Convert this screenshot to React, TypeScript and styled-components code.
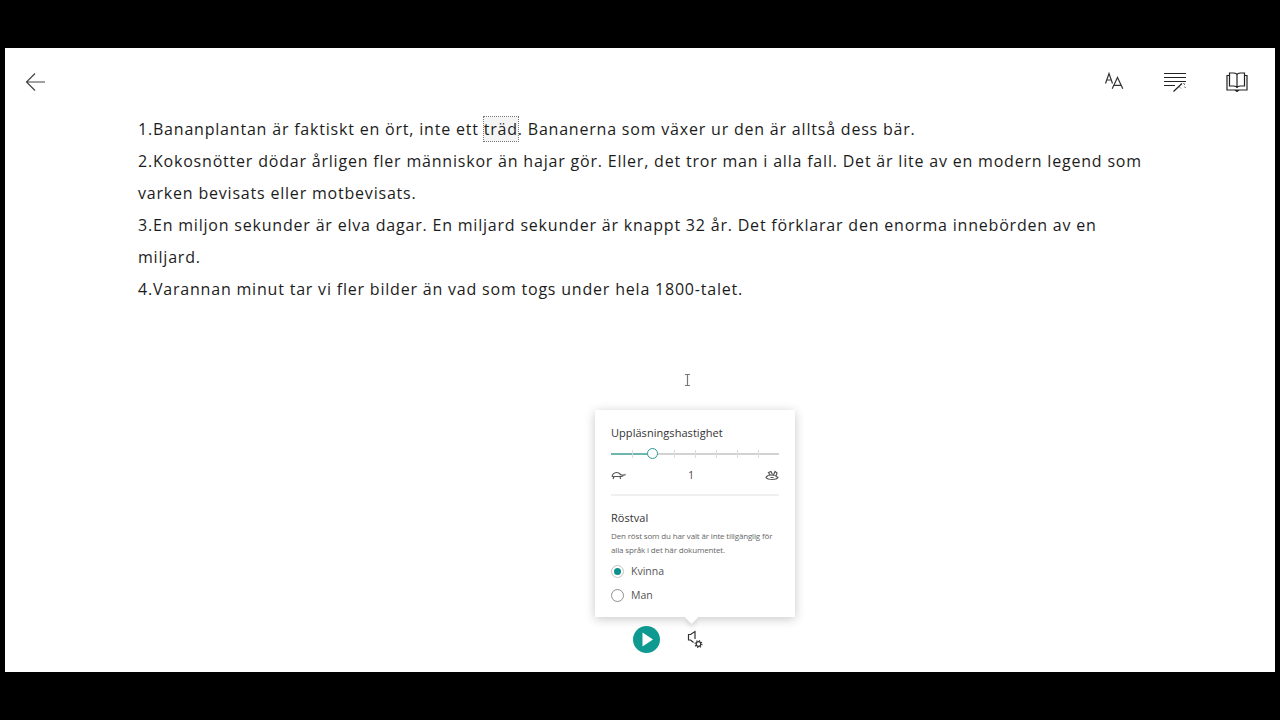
import React from 'react';
import styled, { createGlobalStyle } from 'styled-components';

const GlobalStyle = createGlobalStyle`
  html, body { margin: 0; padding: 0; height: 100%; background: #000; }
  body { font-family: "Open Sans", "Noto Sans", sans-serif; }
`;

const Frame = styled.div`
  width: 1280px;
  height: 720px;
  box-sizing: border-box;
  padding: 48px 5px;
  background: #000;
  overflow: hidden;
`;

const Page = styled.main`
  position: relative;
  height: 624px;
  background: #fff;
  display: flex;
  flex-direction: column;
`;

const TopBar = styled.header`
  display: flex;
  align-items: center;
  justify-content: space-between;
  height: 65px;
  padding: 2px 27px 0 19px;
  box-sizing: border-box;
  flex: none;
`;

const IconGroup = styled.div`
  display: flex;
  align-items: center;
  gap: 39px;
`;

const Icon = styled.svg`
  display: block;
  flex: none;
  fill: none;
  stroke: ${p => p.color || '#333'};
  stroke-width: 1.2;
`;

const Article = styled.article`
  padding: 0 128px 0 133px;
  font-size: 16px;
  line-height: 32px;
  letter-spacing: 0.8px;
  color: #1c1c1c;
`;

const Line = styled.p`
  margin: 0;
`;

const Word = styled.span`
  outline: 1px dotted #777;
  outline-offset: 0;
  background: #f4f4f4;
  padding: 1px 0;
`;

const Dock = styled.div`
  margin-top: auto;
  margin-left: 590px;
  width: 200px;
  display: flex;
  flex-direction: column;
  padding-bottom: 11px;
`;

const Popover = styled.section`
  position: relative;
  box-sizing: border-box;
  height: 207px;
  padding: 15px 16px 0;
  background: #fff;
  box-shadow: 0 2px 10px rgba(0, 0, 0, 0.22);
  &::after {
    content: '';
    position: absolute;
    left: 91px;
    bottom: -6px;
    width: 11px;
    height: 11px;
    background: #fff;
    transform: rotate(45deg) scale(0.85);
    box-shadow: 3px 3px 5px rgba(0, 0, 0, 0.1);
  }
`;

const Heading = styled.h3`
  margin: 0;
  font-size: 11px;
  line-height: 15px;
  font-weight: 400;
  color: #333;
  letter-spacing: 0.05px;
`;

const Slider = styled.div`
  position: relative;
  height: 14px;
  margin-top: 7px;
  display: flex;
  align-items: center;
`;

const Track = styled.div`
  position: relative;
  width: 168px;
  height: 2px;
  background: #d2d2d2;
`;

const TrackFill = styled.div`
  height: 2px;
  width: 37px;
  background: #6fb5b0;
`;

const Tick = styled.span`
  position: absolute;
  top: -3px;
  width: 1px;
  height: 8px;
  background: #dcdcdc;
`;

const Thumb = styled.span`
  position: absolute;
  top: -5px;
  left: 36px;
  width: 9px;
  height: 9px;
  border: 1px solid #2c9a94;
  border-radius: 50%;
  background: #fff;
`;

const SpeedRow = styled.div`
  display: flex;
  align-items: center;
  justify-content: space-between;
  height: 20px;
  margin-top: 4px;
  padding-bottom: 9px;
  border-bottom: 2px solid #f0f0f0;
  font-size: 10px;
  color: #444;
`;

const SpeedValue = styled.span`
  margin-right: 9px;
`;

const VoiceHeading = styled(Heading)`
  margin-top: 14px;
`;

const Note = styled.p`
  margin: 4px 0 0;
  font-size: 8px;
  line-height: 13.5px;
  letter-spacing: -0.15px;
  color: #666;
`;

const RadioRow = styled.label`
  display: flex;
  align-items: center;
  gap: 7px;
  height: 24px;
  font-size: 10.5px;
  color: #555;
`;

const RadioList = styled.div`
  margin-top: 3px;
`;

const RadioMark = styled.span<{ $on?: boolean }>`
  box-sizing: border-box;
  width: 13px;
  height: 13px;
  border-radius: 50%;
  border: 1px solid #8f8f8f;
  background: #fff;
  display: flex;
  align-items: center;
  justify-content: center;
  ${p => p.$on && 'border-color: #c4c4c4;'}
  &::before {
    content: '';
    display: ${p => (p.$on ? 'block' : 'none')};
    width: 7px;
    height: 7px;
    border-radius: 50%;
    background: #0b9189;
  }
`;

const Controls = styled.div`
  display: flex;
  align-items: center;
  height: 44px;
  padding-left: 38px;
  gap: 27px;
`;

const PlayButton = styled.button`
  width: 27px;
  height: 27px;
  padding: 0;
  border: 0;
  border-radius: 50%;
  background: #0e9a90;
  display: flex;
  align-items: center;
  justify-content: center;
`;

const Caret = styled.div`
  position: absolute;
  left: 680px;
  top: 326px;
  width: 5px;
  height: 12px;
`;

export default function App() {
  const ticks = [21, 42, 63, 84, 105, 126, 147];
  return (
    <>
      <GlobalStyle />
      <Frame>
        <Page>
          <TopBar>
            <Icon width="24" height="24" viewBox="0 0 24 24" color="#444">
              <path d="M21 12H2.500M11 3.500L2.500 12l8.500 8.500" />
            </Icon>
            <IconGroup>
              <Icon width="20" height="20" viewBox="0 0 20 20" strokeWidth="1" color="#333">
                <path d="M1.500 11.500L5 1.500l3.500 10M2.600 8h4.800M8.200 16.800L13.500 5.500l5.300 11.300M9.800 13.300h7.400" />
              </Icon>
              <Icon width="24" height="20" viewBox="0 0 24 20" color="#222">
                <path d="M1 1.500h22M1 5.500h22M1 9.500h22M1 13.500h11M10.500 19.500l8.500-8" />
                <path d="M20.500 11.500l1.500 1M21.500 15l1 .5M17 15.500l.8.8" strokeWidth="1" />
              </Icon>
              <Icon width="22" height="20" viewBox="0 0 22 20" strokeWidth="1.300" color="#222">
                <path d="M3.500 1h4c2 0 3.500 1 3.500 2.500V16c0-1.200-1.500-2-3.500-2h-4zM18.500 1h-4c-2 0-3.500 1-3.500 2.500V16c0-1.200 1.500-2 3.500-2h4z" />
                <path d="M3.500 3.500H1V18h20V3.500h-2.500M9 18l2 1.500 2-1.500" />
              </Icon>
            </IconGroup>
          </TopBar>
          <Article>
            <Line>1.Bananplantan är faktiskt en ört, inte ett <Word>träd</Word>. Bananerna som växer ur den är alltså dess bär.</Line>
            <Line>2.Kokosnötter dödar årligen fler människor än hajar gör. Eller, det tror man i alla fall. Det är lite av en modern legend som varken bevisats eller motbevisats.</Line>
            <Line>3.En miljon sekunder är elva dagar. En miljard sekunder är knappt 32 år. Det förklarar den enorma innebörden av en miljard.</Line>
            <Line>4.Varannan minut tar vi fler bilder än vad som togs under hela 1800-talet.</Line>
          </Article>
          <Caret>
            <Icon width="5" height="12" viewBox="0 0 5 12" color="#777">
              <path d="M0 .5h5M0 11.500h5M2.500 .5v11" />
            </Icon>
          </Caret>
          <Dock>
            <Popover>
              <Heading>Uppläsningshastighet</Heading>
              <Slider>
                <Track>
                  <TrackFill />
                  {ticks.map(t => <Tick key={t} style={{ left: t }} />)}
                  <Thumb />
                </Track>
              </Slider>
              <SpeedRow>
                <Icon width="15" height="10" viewBox="0 0 15 10" strokeWidth="0.8" color="#555">
                  <path d="M1 6.500c.5-2.500 3-4 5-4s3 1.500 4 2.500h3.500c.5 0 .8-.5.500-1M1 6.500h9.500c.8 0 1.500-.5 2-1.500M3 6.500L2 9M9 6.500l.5 2.500" />
                </Icon>
                <SpeedValue>1</SpeedValue>
                <Icon width="14" height="11" viewBox="0 0 14 11" strokeWidth="0.8" color="#555">
                  <path d="M1 7.500C2 5.500 4 5 6 5s5 .5 7 2.500c-1 1.500-3 2-5.500 2S2 9 1 7.500zM5 5L3.500 2.500 6 1.500l1.500 3M8.500 5L10 1.500l2 1.500-1 3M5.500 7.500h3" />
                </Icon>
              </SpeedRow>
              <VoiceHeading>Röstval</VoiceHeading>
              <Note>Den röst som du har valt är inte tillgänglig för alla språk i det här dokumentet.</Note>
              <RadioList>
                <RadioRow><RadioMark $on />Kvinna</RadioRow>
                <RadioRow><RadioMark />Man</RadioRow>
              </RadioList>
            </Popover>
            <Controls>
              <PlayButton aria-label="Spela upp">
                <svg width="13" height="15" viewBox="0 0 13 15"><path d="M2.500 .5V14.500L13 7.500z" fill="#fff" /></svg>
              </PlayButton>
              <Icon width="17" height="18" viewBox="0 0 17 18" strokeWidth="1" color="#333">
                <path d="M3.500 10H1.500V4.500h2L8 1.500V9M3.500 10l3 2.500" />
                <circle cx="11.500" cy="14" r="2.300" />
                <circle cx="11.500" cy="14" r="3.400" strokeDasharray="1.200 1.470" />
              </Icon>
            </Controls>
          </Dock>
        </Page>
      </Frame>
    </>
  );
}
